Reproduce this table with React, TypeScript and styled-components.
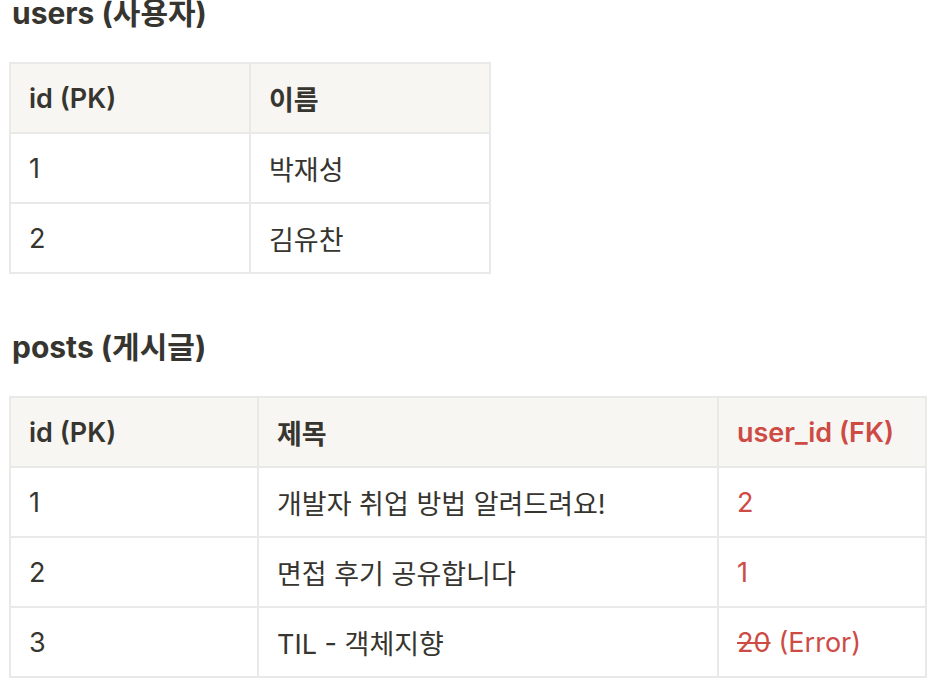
import React from "react";
import styled, { createGlobalStyle } from "styled-components";

const GlobalStyle = createGlobalStyle`
  html, body {
    margin: 0;
    padding: 0;
    background: #ffffff;
  }
  body {
    font-family: Inter, "Noto Sans CJK KR", "Noto Sans", sans-serif;
    color: #37352f;
    -webkit-font-smoothing: antialiased;
  }
`;

const Page = styled.div`
  display: flex;
  flex-direction: column;
  padding: 0 0 0 9px;
  overflow: hidden;
  height: 694px;
  box-sizing: border-box;
`;

const Section = styled.section`
  display: flex;
  flex-direction: column;
  align-items: flex-start;
  gap: 34px;
  margin-bottom: 60px;
`;

const Heading = styled.h3`
  margin: -2px 0 0 3px;
  font-size: 30px;
  line-height: 30px;
  height: 30px;
  font-weight: 700;
  color: #37352f;
  letter-spacing: 0;
`;

const Grid = styled.div<{ $cols: string }>`
  display: grid;
  grid-template-columns: ${(p) => p.$cols};
  border-top: 2px solid #e9e9e7;
  border-left: 2px solid #e9e9e7;
`;

const Cell = styled.div<{ $head?: boolean; $red?: boolean }>`
  box-sizing: border-box;
  height: 70px;
  display: flex;
  align-items: center;
  padding: 0 18px;
  border-right: 2px solid #e9e9e7;
  border-bottom: 2px solid #e9e9e7;
  background: ${(p) => (p.$head ? "#f7f6f3" : "#ffffff")};
  font-size: 27px;
  font-weight: ${(p) => (p.$head ? 600 : 400)};
  color: ${(p) => (p.$red ? "#cd4b44" : "#37352f")};
  white-space: nowrap;
`;

const Strike = styled.span`
  text-decoration: line-through;
  text-decoration-thickness: 2px;
  margin-right: 8px;
`;

type Row = { cells: React.ReactNode[] };

const usersRows: Row[] = [
  { cells: ["1", "박재성"] },
  { cells: ["2", "김유찬"] },
];

const postsRows: Row[] = [
  { cells: ["1", "개발자 취업 방법 알려드려요!", "2"] },
  { cells: ["2", "면접 후기 공유합니다", "1"] },
  {
    cells: [
      "3",
      "TIL - 객체지향",
      <>
        <Strike>20</Strike>(Error)
      </>,
    ],
  },
];

export default function App() {
  return (
    <>
      <GlobalStyle />
      <Page>
        <Section>
          <Heading>users (사용자)</Heading>
          <Grid $cols="240px 240px">
            <Cell $head>id (PK)</Cell>
            <Cell $head>이름</Cell>
            {usersRows.map((r, i) =>
              r.cells.map((c, j) => <Cell key={`${i}-${j}`}>{c}</Cell>)
            )}
          </Grid>
        </Section>
        <Section>
          <Heading>posts (게시글)</Heading>
          <Grid $cols="248px 460px 208px">
            <Cell $head>id (PK)</Cell>
            <Cell $head>제목</Cell>
            <Cell $head $red>
              user_id (FK)
            </Cell>
            {postsRows.map((r, i) =>
              r.cells.map((c, j) => (
                <Cell key={`${i}-${j}`} $red={j === 2}>
                  {c}
                </Cell>
              ))
            )}
          </Grid>
        </Section>
      </Page>
    </>
  );
}
